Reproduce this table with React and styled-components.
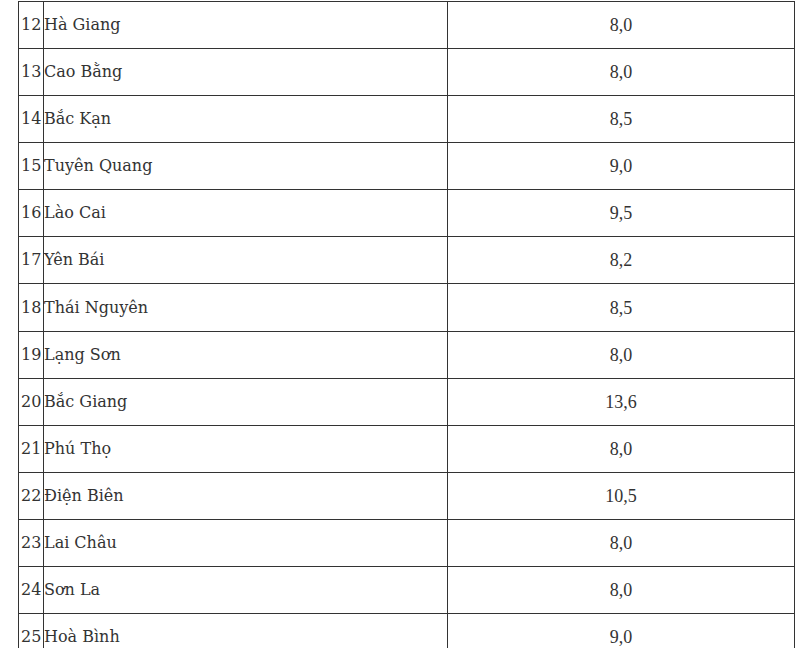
import React from 'react';
import styled, { createGlobalStyle } from 'styled-components';

const GlobalStyle = createGlobalStyle`
  html, body {
    margin: 0;
    padding: 0;
    background: #fff;
    overflow: hidden;
  }
`;

const rows = [
  [12, 'Hà Giang', '8,0'],
  [13, 'Cao Bằng', '8,0'],
  [14, 'Bắc Kạn', '8,5'],
  [15, 'Tuyên Quang', '9,0'],
  [16, 'Lào Cai', '9,5'],
  [17, 'Yên Bái', '8,2'],
  [18, 'Thái Nguyên', '8,5'],
  [19, 'Lạng Sơn', '8,0'],
  [20, 'Bắc Giang', '13,6'],
  [21, 'Phú Thọ', '8,0'],
  [22, 'Điện Biên', '10,5'],
  [23, 'Lai Châu', '8,0'],
  [24, 'Sơn La', '8,0'],
  [25, 'Hoà Bình', '9,0'],
];

export default function App() {
  return (
    <>
      <GlobalStyle />
      <Page>
        <Table>
          {rows.map(([no, name, value]) => (
            <Row key={no}>
              <NoCell>{no}</NoCell>
              <Cell>{name}</Cell>
              <ValueCell>{value}</ValueCell>
            </Row>
          ))}
        </Table>
      </Page>
    </>
  );
}

const Page = styled.div`
  padding: 1px 0 0 18px;
`;

const Table = styled.div`
  display: grid;
  grid-auto-rows: 47.08px;
  width: 777px;
  border-top: 1px solid #333;
  border-left: 1px solid #333;
  box-sizing: border-box;
  color: #333;
  font-family: "DejaVu Serif", "Liberation Serif", serif;
  font-size: 16px;
`;

const Row = styled.div`
  display: grid;
  grid-template-columns: 25px 404px 347px;
`;

const Cell = styled.div`
  display: flex;
  align-items: center;
  justify-content: flex-start;
  border-right: 1px solid #333;
  border-bottom: 1px solid #333;
  white-space: nowrap;
  line-height: 28px;
  overflow: hidden;
`;

const NoCell = styled(Cell)`
  padding-left: 2px;
`;

const ValueCell = styled(Cell)`
  justify-content: center;
  font-family: "Liberation Serif", serif;
  font-size: 18px;
`;
